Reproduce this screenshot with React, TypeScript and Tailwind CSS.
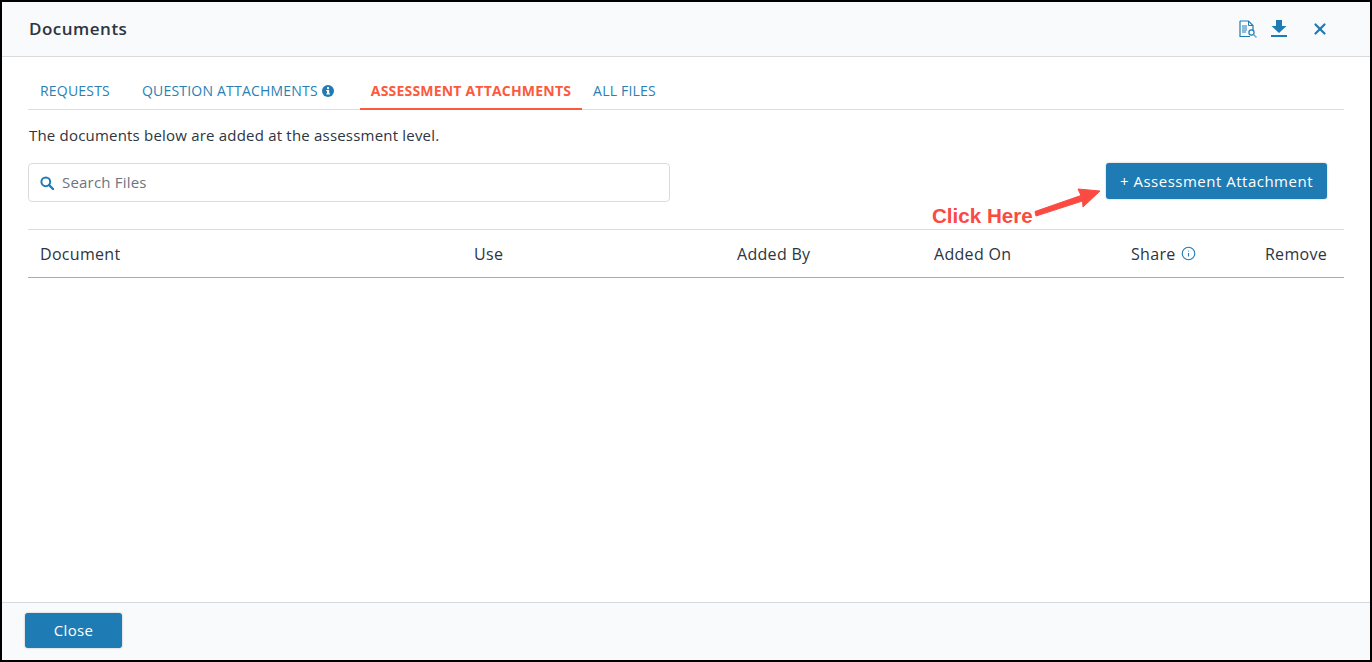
import { Info, X } from "lucide-react";

const font = { fontFamily: '"Open Sans", sans-serif' };

function FileSearchIcon() {
  return (
    <svg width="19" height="18" viewBox="0 0 19 18" fill="none">
      <path d="M1 1h8.5L14 5.5V11M1 1v15.5h10" stroke="#1f7bb3" strokeWidth="1.2" />
      <path d="M9.5 1v4.5H14" stroke="#1f7bb3" strokeWidth="1" />
      <path d="M3 6h5M3 8h5M3 10h5M3 12h4" stroke="#6aa6cd" strokeWidth="1.3" />
      <circle cx="12.5" cy="12.5" r="2.6" stroke="#1f7bb3" strokeWidth="1.2" />
      <path d="M14.5 14.5l3 3" stroke="#6aa6cd" strokeWidth="1.4" />
    </svg>
  );
}

function SolidDownload() {
  return (
    <svg width="16" height="18" viewBox="0 0 16 18" fill="#1f7bb3">
      <path d="M5 0h6v6h4.5L8 13 .5 6H5z" />
      <rect x="0" y="15" width="16" height="2" />
    </svg>
  );
}

function SolidInfo() {
  return (
    <svg width="12" height="12" viewBox="0 0 12 12">
      <circle cx="6" cy="6" r="6" fill="#1f7bb3" />
      <rect x="5" y="5" width="2.2" height="4.2" fill="#fff" />
      <rect x="4.2" y="8.4" width="3.8" height="1" fill="#fff" />
      <rect x="4.2" y="5" width="2" height="1" fill="#fff" />
      <circle cx="6" cy="3.1" r="1.2" fill="#fff" />
    </svg>
  );
}

function SearchGlyph() {
  return (
    <svg width="14" height="14" viewBox="0 0 14 14" fill="none" stroke="#1f7bb3">
      <circle cx="5.8" cy="5.8" r="4.4" strokeWidth="2" />
      <path d="M9 9l4 4" strokeWidth="2.4" strokeLinecap="round" />
    </svg>
  );
}

function Arrow() {
  return (
    <svg width="70" height="34" viewBox="0 0 70 34" className="absolute left-[1032px] top-[184px]">
      <path d="M1 25.5 L47 9.5 L44 3 L66 5 L49 21 L48.5 15 L2 30 Z" fill="#fb4a42" strokeLinejoin="round" stroke="#fb4a42" strokeWidth="1" />
    </svg>
  );
}

export default function App() {
  return (
    <div className="relative flex h-[662px] w-[1372px] flex-col border-2 border-black bg-white text-[#2c3542]" style={font}>
      <div className="flex h-[55px] shrink-0 items-center justify-between border-b border-[#d9dcdf] bg-[#f9fafc] pl-[27px] pr-[41px]">
        <h1 className="text-[17px] font-semibold tracking-[0.5px]">Documents</h1>
        <div className="flex items-center">
          <FileSearchIcon />
          <span className="ml-[13px] flex"><SolidDownload /></span>
          <X className="ml-[24px] text-[#1f7bb3]" size={18} strokeWidth={3} />
        </div>
      </div>

      <div className="flex-1 px-[26px]">
        <div className="mt-[15px] flex h-[38px] border-b border-[#dcdfe2] text-sm tracking-[0.2px]">
          <a className="flex h-[37px] items-center px-3 text-[#2a7fb5]">REQUESTS</a>
          <a className="ml-2 flex h-[37px] items-center gap-1 px-3 text-[#2a7fb5]">QUESTION ATTACHMENTS <SolidInfo /></a>
          <a className="ml-[14px] flex h-[38px] items-center border-b-2 border-[#fb5a41] px-[11px] pt-[2px] font-bold text-[#fb5a41]">ASSESSMENT ATTACHMENTS</a>
          <a className="flex h-[37px] items-center px-[11px] text-[#2a7fb5]">ALL FILES</a>
        </div>
        <p className="mt-[15px] pl-px text-[15px] leading-5 tracking-[0.2px]">The documents below are added at the assessment level.</p>

        <div className="mt-[18px] flex items-start justify-between pr-[17px]">
          <div className="flex h-[39px] w-[642px] items-center gap-2 rounded border border-[#d9dcdf] px-[11px]">
            <SearchGlyph />
            <span className="text-[15px] tracking-[0.2px] text-[#6c757d]">Search Files</span>
          </div>
          <button className="h-[36px] w-[221px] rounded-[3px] bg-[#1f7bb3] text-[15px] font-medium tracking-[0.5px] text-white shadow-[0_0_2px_rgba(0,0,0,0.3)]">
            + Assessment Attachment
          </button>
        </div>

        <div className="mt-[27px] flex h-[49px] items-center border-y border-t-[#d9dcdf] border-b-[#a9acaf] pl-3 pr-[17px] text-base font-medium tracking-[0.3px]">
          <div className="w-[434px]">Document</div>
          <div className="w-[263px]">Use</div>
          <div className="w-[197px]">Added By</div>
          <div className="w-[197px]">Added On</div>
          <div className="flex items-center gap-[5px]">Share <Info size={15} className="text-[#1f7bb3]" strokeWidth={1.8} /></div>
          <div className="ml-auto">Remove</div>
        </div>
      </div>

      <div className="flex h-[58px] shrink-0 items-center border-t border-[#d5dade] bg-[#f9fafc] pb-[2px] pl-[23px]">
        <button className="h-[35px] w-[97px] rounded-[3px] bg-[#1f7bb3] text-[15px] font-medium tracking-[0.3px] text-white shadow-[0_0_2px_rgba(0,0,0,0.3)]">Close</button>
      </div>

      <span className="absolute left-[930px] top-[199px] text-[20.6px] font-bold text-[#fb4a42]" style={{ fontFamily: '"Liberation Sans", sans-serif' }}>Click Here</span>
      <Arrow />
    </div>
  );
}
